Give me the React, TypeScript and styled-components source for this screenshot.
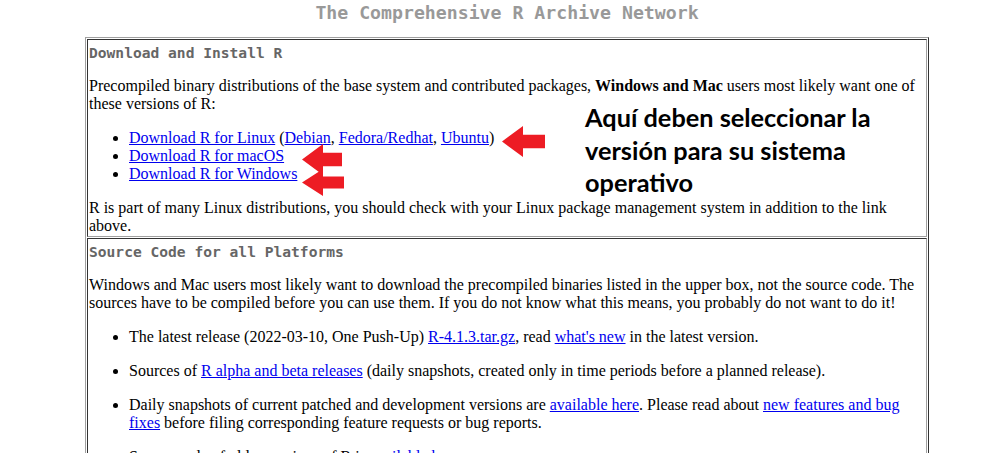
import React from "react";
import styled, { createGlobalStyle } from "styled-components";

const GlobalStyle = createGlobalStyle`
  html, body { margin: 0; padding: 0; background: #fff; }
  body {
    font-family: "Liberation Serif", "Times New Roman", serif;
    font-size: 16px;
    color: #000;
  }
`;

const Page = styled.div`
  position: relative;
  width: 990px;
`;

const Content = styled.div`
  width: 844px;
  margin-left: 85px;
`;

const Title = styled.h1`
  margin: 2px 0 14px;
  font-family: "DejaVu Sans Mono", "Liberation Mono", monospace;
  font-size: 18.2px;
  line-height: 21px;
  font-weight: bold;
  color: #999;
  text-align: center;
`;

const Table = styled.table`
  width: 844px;
  border-collapse: separate;
  border-spacing: 1px;
  border: 1px solid;
  border-color: #a0a0a0 #333 #333 #a0a0a0;
`;

const Cell = styled.td`
  padding: 1px;
  border: 1px solid;
  border-color: #333 #a0a0a0 #a0a0a0 #333;
  vertical-align: top;
`;

const Heading = styled.h3`
  margin: 3px 0 16px;
  font-family: "DejaVu Sans Mono", "Liberation Mono", monospace;
  font-size: 14.6px;
  line-height: 17px;
  font-weight: bold;
  color: #666;
`;

const Para = styled.p`
  margin: 16px 0;
  line-height: 18px;
  &:last-child { margin-bottom: 0; }
`;

const List = styled.ul<{ $spaced?: boolean }>`
  margin: 16px 0;
  padding-left: 40px;
  line-height: 18px;
  & > li { margin: ${(p) => (p.$spaced ? "16px 0" : "0")}; }
`;

const Link = styled.a`
  color: #0000ee;
  text-decoration: underline;
`;

const Note = styled.div`
  position: absolute;
  left: 585px;
  top: 99px;
  font-family: Lato, "Open Sans", sans-serif;
  font-weight: 700;
  font-size: 25.3px;
  line-height: 32.5px;
  color: #000;
  white-space: nowrap;
`;

const ArrowSvg = styled.svg<{ $left: number; $top: number }>`
  position: absolute;
  left: ${(p) => p.$left}px;
  top: ${(p) => p.$top}px;
`;

function Arrow({ left, top, w, h }: { left: number; top: number; w: number; h: number }) {
  const head = 21;
  const shaftTop = h * 0.28;
  const shaftBot = h * 0.72;
  const pts = `0,${h / 2} ${head},0 ${head},${shaftTop} ${w},${shaftTop} ${w},${shaftBot} ${head},${shaftBot} ${head},${h}`;
  return (
    <ArrowSvg $left={left} $top={top} width={w} height={h} viewBox={`0 0 ${w} ${h}`}>
      <polygon points={pts} fill="#ed1c24" />
    </ArrowSvg>
  );
}

export default function App() {
  return (
    <Page>
      <GlobalStyle />
      <Content>
        <Title>The Comprehensive R Archive Network</Title>
        <Table>
          <tbody>
            <tr>
              <Cell>
                <Heading>Download and Install R</Heading>
                <Para>
                  Precompiled binary distributions of the base system and contributed packages,{" "}
                  <b>Windows and Mac</b> users most likely want one of these versions of R:
                </Para>
                <List>
                  <li>
                    <Link href="#">Download R for Linux</Link> (<Link href="#">Debian</Link>,{" "}
                    <Link href="#">Fedora/Redhat</Link>, <Link href="#">Ubuntu</Link>)
                  </li>
                  <li>
                    <Link href="#">Download R for macOS</Link>
                  </li>
                  <li>
                    <Link href="#">Download R for Windows</Link>
                  </li>
                </List>
                <Para>
                  R is part of many Linux distributions, you should check with your Linux package
                  management system in addition to the link above.
                </Para>
              </Cell>
            </tr>
            <tr>
              <Cell>
                <Heading>Source Code for all Platforms</Heading>
                <Para>
                  Windows and Mac users most likely want to download the precompiled binaries listed
                  in the upper box, not the source code. The sources have to be compiled before you
                  can use them. If you do not know what this means, you probably do not want to do
                  it!
                </Para>
                <List $spaced>
                  <li>
                    The latest release (2022-03-10, One Push-Up) <Link href="#">R-4.1.3.tar.gz</Link>,
                    read <Link href="#">what's new</Link> in the latest version.
                  </li>
                  <li>
                    Sources of <Link href="#">R alpha and beta releases</Link> (daily snapshots,
                    created only in time periods before a planned release).
                  </li>
                  <li>
                    Daily snapshots of current patched and development versions are{" "}
                    <Link href="#">available here</Link>. Please read about{" "}
                    <Link href="#">new features and bug fixes</Link> before filing corresponding
                    feature requests or bug reports.
                  </li>
                  <li>
                    Source code of older versions of R is <Link href="#">available here</Link>.
                  </li>
                </List>
              </Cell>
            </tr>
          </tbody>
        </Table>
      </Content>
      <Note>
        Aquí deben seleccionar la
        <br />
        versión para su sistema
        <br />
        operativo
      </Note>
      <Arrow left={502} top={124} w={43} h={31} />
      <Arrow left={302} top={142} w={40} h={31} />
      <Arrow left={302} top={167} w={42} h={27} />
    </Page>
  );
}
